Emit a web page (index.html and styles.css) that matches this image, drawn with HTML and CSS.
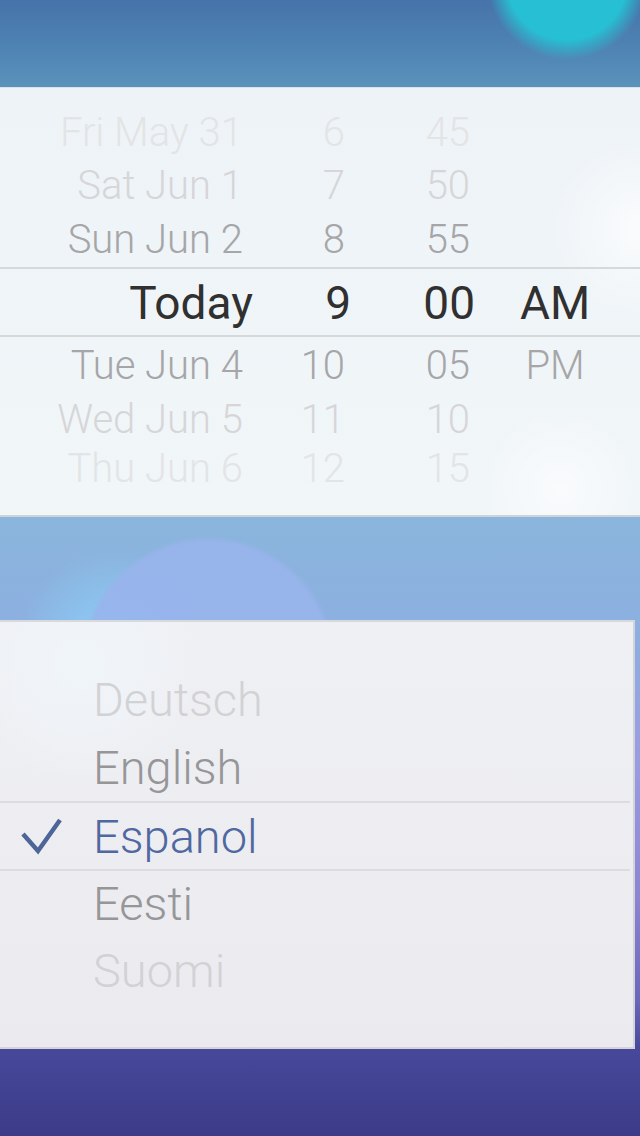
FILE: index.html
```html
<!DOCTYPE html>
<html lang="en">
<head>
<meta charset="utf-8">
<title>Pickers</title>
<link rel="stylesheet" href="styles.css">
</head>
<body>
<div class="screen">
  <section class="picker">
    <div class="row tone-4 h53">
      <span class="c-date">Fri May 31</span><span class="c-hour">6</span><span class="c-min">45</span><span class="c-ampm"></span>
    </div>
    <div class="row tone-3 h53">
      <span class="c-date">Sat Jun 1</span><span class="c-hour">7</span><span class="c-min">50</span><span class="c-ampm"></span>
    </div>
    <div class="row tone-2 h55">
      <span class="c-date">Sun Jun 2</span><span class="c-hour">8</span><span class="c-min">55</span><span class="c-ampm"></span>
    </div>
    <div class="row row-selected">
      <span class="c-date">Today</span><span class="c-hour">9</span><span class="c-min">00</span><span class="c-ampm">AM</span>
    </div>
    <div class="row tone-2 h54 below">
      <span class="c-date">Tue Jun 4</span><span class="c-hour">10</span><span class="c-min">05</span><span class="c-ampm">PM</span>
    </div>
    <div class="row tone-3 h53 below">
      <span class="c-date">Wed Jun 5</span><span class="c-hour">11</span><span class="c-min">10</span><span class="c-ampm"></span>
    </div>
    <div class="row tone-4 h46 below">
      <span class="c-date">Thu Jun 6</span><span class="c-hour">12</span><span class="c-min">15</span><span class="c-ampm"></span>
    </div>
  </section>

  <section class="langs">
    <div class="item faint h68"><span class="mark"></span>Deutsch</div>
    <div class="item mid h68"><span class="mark"></span>English</div>
    <div class="item item-selected"><span class="mark"><svg class="check" width="93" height="66" viewBox="0 0 93 66"><polyline points="23,31 38,48 60,17" fill="none" stroke="#4d6597" stroke-width="4.5"/></svg></span>Espanol</div>
    <div class="item mid h64"><span class="mark"></span>Eesti</div>
    <div class="item faint h70"><span class="mark"></span>Suomi</div>
  </section>
</div>
</body>
</html>
```

FILE: styles.css
```css
html, body {
  margin: 0;
  padding: 0;
}

body {
  width: 640px;
  height: 1136px;
  overflow: hidden;
  font-family: Roboto, "Liberation Sans", sans-serif;
  background:
    radial-gradient(circle at 567px -20px, #27bfd3 0, #27bfd3 60px, rgba(39, 191, 211, 0) 80px),
    radial-gradient(circle at 208px 664px, rgba(152, 180, 236, 0.9) 0, rgba(152, 180, 236, 0.9) 122px, rgba(152, 180, 236, 0) 128px),
    radial-gradient(circle at 115px 650px, rgba(140, 212, 252, 0.95) 0, rgba(140, 212, 252, 0) 100px),
    linear-gradient(180deg, #4673aa 0, #4f84b4 50px, #5a92bb 86px, #78a8d2 300px, #8ab5dc 520px, #8cb0e0 620px, #9a9ce0 760px, #8c84d2 900px, #6a66ba 1000px, #47489a 1050px, #3c3b89 1136px);
}

.screen {
  padding-top: 87px;
  display: flex;
  flex-direction: column;
  gap: 103px;
}

/* ---------- date/time picker ---------- */
.picker {
  height: 430px;
  box-sizing: border-box;
  border-top: 1px solid #dbe3ea;
  border-bottom: 2px solid #cfd3d7;
  padding: 18px 0 25px;
  background:
    radial-gradient(circle at 640px 140px, rgba(255, 255, 255, 0.7) 0, rgba(255, 255, 255, 0) 90px),
    radial-gradient(circle at 560px 400px, rgba(255, 255, 255, 0.6) 0, rgba(255, 255, 255, 0) 80px),
    linear-gradient(180deg, #eef3f7 0, #f1f6f9 100%);
  display: flex;
  flex-direction: column;
}

.row {
  display: flex;
  font-size: 40px;
  font-weight: 300;
  white-space: nowrap;
}

.h53 { height: 53px; line-height: 53px; }
.h54 { height: 54px; line-height: 54px; }
.h55 { height: 55px; line-height: 55px; }
.h46 { height: 46px; line-height: 46px; }

.row.below { line-height: normal; align-items: center; padding-top: 3px; box-sizing: border-box; }

.c-date { width: 243px; text-align: right; }
.c-hour { width: 102px; text-align: right; }
.c-min { width: 125px; text-align: right; }
.c-ampm { flex: 1; text-align: center; }

.tone-2 { color: #a6a6a8; }
.tone-3 { color: #d6d6d8; }
.tone-4 { color: #e3e4e6; }

.row-selected {
  height: 66px;
  line-height: 68px;
  border-top: 2px solid #d6d8da;
  border-bottom: 2px solid #d6d8da;
  color: #303030;
  font-size: 46px;
  font-weight: 400;
}

.row-selected .c-date { width: 253px; }
.row-selected .c-hour { width: 98px; }
.row-selected .c-min { width: 124px; }
.row-selected .c-ampm { flex: none; width: 160px; }

/* ---------- language list ---------- */
.langs {
  width: 635px;
  height: 429px;
  box-sizing: border-box;
  border-top: 2px solid #d8d9dd;
  border-right: 2px solid #d3d4d9;
  border-bottom: 2px solid #d3d3d8;
  padding: 43px 0 42px;
  background:
    radial-gradient(circle at 80px 40px, rgba(240, 246, 250, 0.9) 0, rgba(240, 246, 250, 0) 120px),
    linear-gradient(180deg, #eff0f4 0, #ebebef 100%);
  display: flex;
  flex-direction: column;
}

.item {
  display: flex;
  align-items: center;
  font-size: 47px;
  font-weight: 300;
}

.h68 { height: 68px; }
.h64 { height: 64px; }
.h70 { height: 70px; }

.mark {
  width: 93px;
  height: 100%;
  flex: none;
  display: flex;
}

.faint { color: #d2d2d5; }
.mid { color: #969699; }

.item-selected {
  height: 66px;
  border-top: 2px solid #dcdcdf;
  border-bottom: 2px solid #dcdcdf;
  margin-right: 3px;
  color: #4f68a0;
}

.check { display: block; }
```
